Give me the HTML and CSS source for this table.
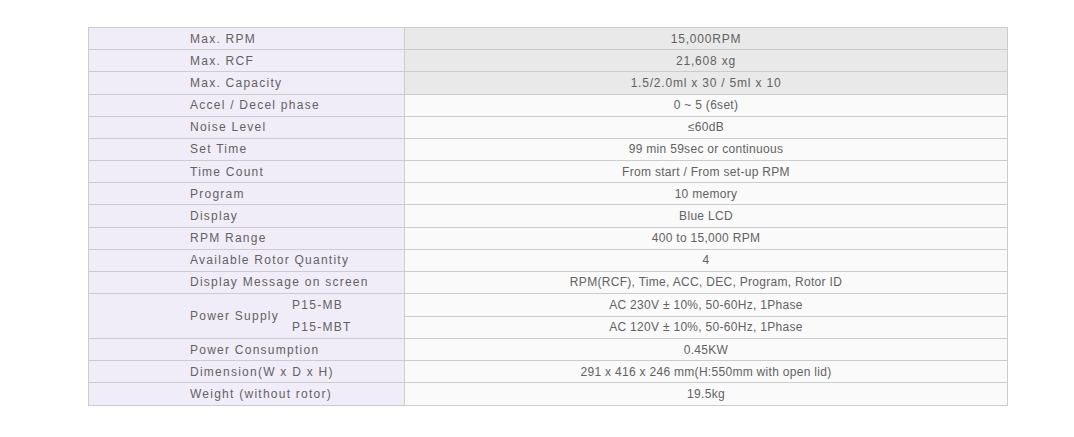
FILE: index.html
```html
<!DOCTYPE html>
<html>
<head>
<meta charset="utf-8">
<link rel="stylesheet" href="styles.css">
</head>
<body>
<div class="wrap">
<table class="spec">
  <colgroup><col class="c-label"><col class="c-value"></colgroup>
  <tbody>
    <tr class="hl"><th>Max. RPM</th><td>15,000RPM</td></tr>
    <tr class="hl"><th>Max. RCF</th><td>21,608 xg</td></tr>
    <tr class="hl"><th>Max. Capacity</th><td>1.5/2.0ml x 30 / 5ml x 10</td></tr>
    <tr><th>Accel / Decel phase</th><td>0 ~ 5 (6set)</td></tr>
    <tr><th>Noise Level</th><td>≤60dB</td></tr>
    <tr><th>Set Time</th><td>99 min 59sec or continuous</td></tr>
    <tr><th>Time Count</th><td>From start / From set-up RPM</td></tr>
    <tr><th>Program</th><td>10 memory</td></tr>
    <tr><th>Display</th><td>Blue LCD</td></tr>
    <tr><th>RPM Range</th><td>400 to 15,000 RPM</td></tr>
    <tr><th>Available Rotor Quantity</th><td>4</td></tr>
    <tr><th>Display Message on screen</th><td>RPM(RCF), Time, ACC, DEC, Program, Rotor ID</td></tr>
    <tr><th rowspan="2"><div class="ps"><span>Power Supply</span><span class="models"><span>P15-MB</span><span>P15-MBT</span></span></div></th><td>AC 230V ± 10%, 50-60Hz, 1Phase</td></tr>
    <tr><td>AC 120V ± 10%, 50-60Hz, 1Phase</td></tr>
    <tr><th>Power Consumption</th><td>0.45KW</td></tr>
    <tr><th>Dimension(W x D x H)</th><td>291 x 416 x 246 mm(H:550mm with open lid)</td></tr>
    <tr><th>Weight (without rotor)</th><td>19.5kg</td></tr>
  </tbody>
</table>
</div>
</body>
</html>
```

FILE: styles.css
```css
html, body {
  margin: 0;
  padding: 0;
  background: #ffffff;
}
.wrap {
  padding: 27px 0 0 88px;
}
.spec {
  border-collapse: collapse;
  width: 920px;
  table-layout: fixed;
  font-family: "Liberation Sans", Arial, sans-serif;
  font-size: 12px;
  color: #626262;
}
.c-label { width: 316px; }
.spec tr { height: 22.18px; }
.spec th, .spec td {
  border: 1px solid #cccccc;
  padding: 0;
  line-height: 14px;
  font-weight: normal;
  vertical-align: middle;
}
.spec th {
  background: #f1edf8;
  text-align: left;
  padding-left: 101px;
  letter-spacing: 1.25px;
}
.spec td {
  background: #fafafa;
  text-align: center;
  letter-spacing: 0.3px;
}
.spec tr.hl td {
  background: #e9e9e9;
  letter-spacing: 0.8px;
}
.ps {
  display: flex;
  align-items: center;
}
.models {
  display: flex;
  flex-direction: column;
  margin-left: 13px;
}
.models span {
  line-height: 22px;
}
```
